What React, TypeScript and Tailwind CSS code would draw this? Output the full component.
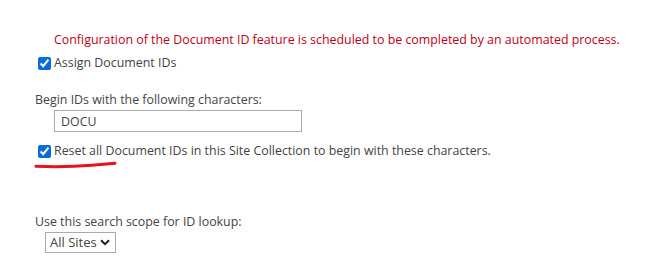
import { useState } from "react"

export default function App() {
  const [assign, setAssign] = useState(true)
  const [reset, setReset] = useState(true)
  const [prefix, setPrefix] = useState("DOCU")

  return (
    <div
      className="h-[280px] w-[649px] bg-white pl-[35px] pt-[31px] text-[12.4px] leading-[18px] text-[#444444]"
      style={{ fontFamily: '"Segoe UI", "Open Sans", "Noto Sans", sans-serif' }}
    >
      {/* Status message */}
      <p className="ml-[19px] text-[#c00018]">
        Configuration of the Document ID feature is scheduled to be completed by an automated process.
      </p>

      <label className="mt-[5px] flex items-center">
        <input
          type="checkbox"
          checked={assign}
          onChange={(e) => setAssign(e.target.checked)}
          className="m-0 ml-[3px] mr-[3px] h-[13px] w-[13px] accent-[#0a6cd8]"
        />
        <span>Assign Document IDs</span>
      </label>

      <div className="mt-[19px]">Begin IDs with the following characters:</div>
      <input
        type="text"
        value={prefix}
        onChange={(e) => setPrefix(e.target.value)}
        className="mt-[1px] ml-[19px] block h-[22px] w-[248px] border border-[#ababab] px-[6px] text-[12.4px] text-[#444444] outline-none"
      />

      <label className="mt-[10px] flex items-center">
        <input
          type="checkbox"
          checked={reset}
          onChange={(e) => setReset(e.target.checked)}
          className="m-0 ml-[3px] mr-[3px] h-[13px] w-[13px] accent-[#0a6cd8]"
        />
        <span>Reset all Document IDs in this Site Collection to begin with these characters.</span>
      </label>

      {/* hand-drawn annotation */}
      <svg width="84" height="10" viewBox="0 0 84 10" className="-mt-[1px] -ml-[1px] block">
        <path
          d="M2 7.2 C 20 8, 40 7.6, 58 6.2 C 68 5.4, 76 4.6, 81 4.2"
          stroke="#e3141b"
          strokeWidth="3"
          fill="none"
          strokeLinecap="round"
        />
      </svg>

      <div className="mt-[44px]">Use this search scope for ID lookup:</div>
      <div className="relative mt-[1px] ml-[10px] w-[71px]">
        <select className="block h-[21px] w-[71px] appearance-none border border-[#ababab] bg-white pl-[4px] text-[13px] leading-[19px] text-[#444444] outline-none">
          <option>All Sites</option>
          <option>This Site</option>
        </select>
        <svg
          width="10"
          height="7"
          viewBox="0 0 10 7"
          className="pointer-events-none absolute right-[6px] top-[7px]"
        >
          <path d="M1 1.2 L5 5.2 L9 1.2" stroke="#222" strokeWidth="2" fill="none" />
        </svg>
      </div>
    </div>
  )
}
